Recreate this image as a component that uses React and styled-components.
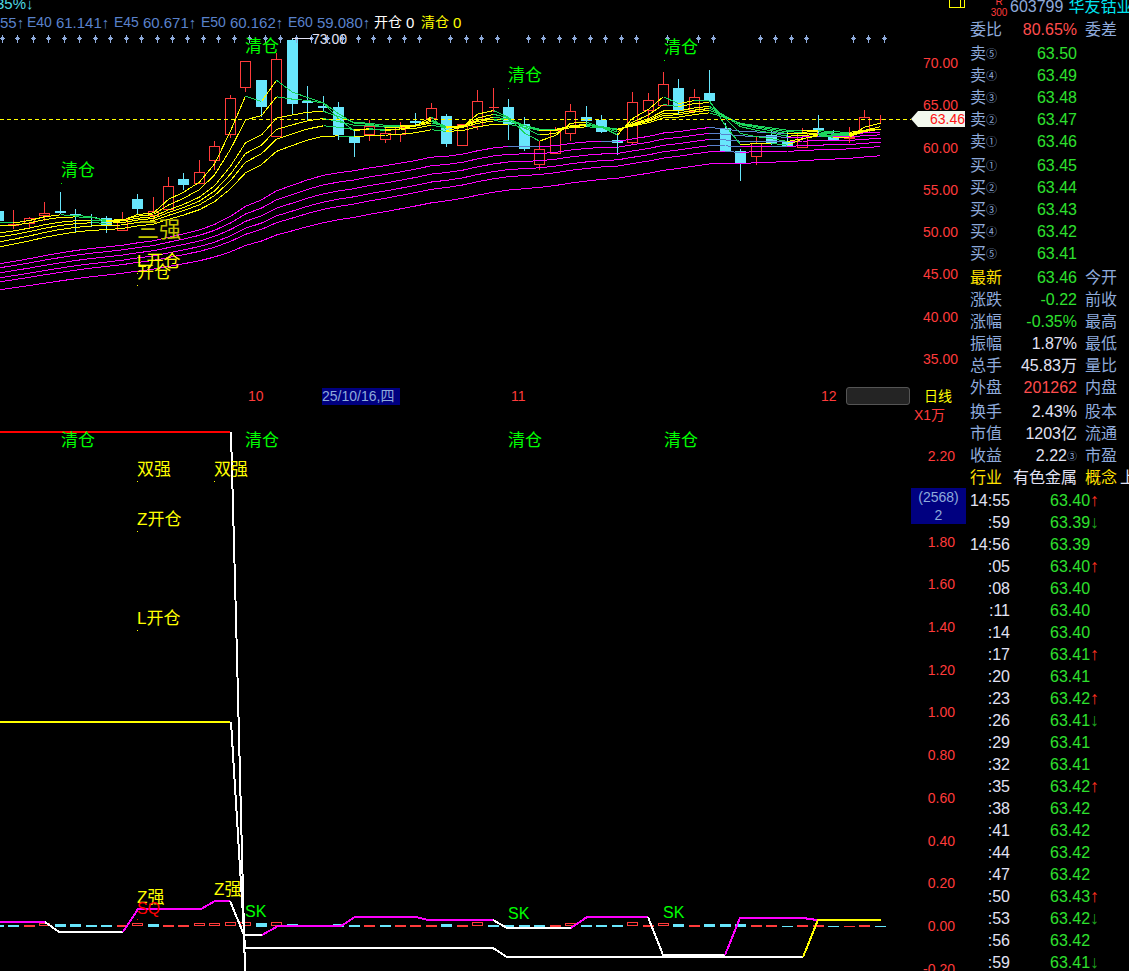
import React from 'react';
import styled, { createGlobalStyle } from 'styled-components';

const color = {
  steel: '#8eaadb',
  blue: '#5a82cc',
  cyan: '#68e6fc',
  red: '#ff3b3b',
  green: '#2ee02e',
  lime: '#00ff00',
  yellow: '#ffff00',
  gold: '#ffe100',
  magenta: '#ff00ff',
  white: '#e2e2f4',
  navy: '#000080',
};

const Global = createGlobalStyle`
  * { box-sizing: border-box; }
  body {
    margin: 0;
    background: #000;
    color: ${color.white};
    font-family: 'Liberation Sans', 'Noto Sans CJK SC', sans-serif;
    font-weight: 400;
  }
`;

const Terminal = styled.div`
  display: flex;
  height: 100vh;
  overflow: hidden;
  background: #000;
`;

const Workspace = styled.main`
  flex: 1;
  min-width: 0;
  display: flex;
  flex-direction: column;
`;

const TopBar = styled.header`
  display: flex;
  justify-content: space-between;
  align-items: flex-end;
  height: 12px;
  overflow: hidden;
`;

const ChangeText = styled.span`
  margin-left: -4px;
  font-size: 15px;
  line-height: 16px;
  color: #4fd8e4;
`;

const LayoutButton = styled.button`
  align-self: flex-start;
  width: 17px;
  height: 9px;
  padding: 0;
  border: 0;
  background: none;
  svg { display: block; }
`;

const IndicatorBar = styled.div`
  display: flex;
  height: 20px;
  line-height: 21px;
  white-space: nowrap;
`;

const Indicator = styled.span`
  flex: 0 0 ${(p) => p.$width};
  display: flex;
  gap: 4px;
  font-size: 14px;
  color: ${(p) => p.$color || color.blue};
  b { font-size: 15px; font-weight: 400; }
`;

const Pane = styled.section`
  display: flex;
  flex: ${(p) => (p.$grow ? '1 0 0' : '0 0 353px')};
  min-height: 0;
  overflow: hidden;
`;

const Plot = styled.svg`
  flex: 1;
  min-width: 0;
  height: ${(p) => p.$height};
  display: block;
`;

const Axis = styled.div`
  position: relative;
  flex: 0 0 55px;
  padding-top: ${(p) => p.$top || '0'};
  font-size: 14px;
  color: ${color.red};
`;

const Scale = styled.ol`
  display: grid;
  grid-auto-rows: 1fr;
  align-items: center;
  height: ${(p) => p.$height};
  margin: 0;
  padding: 0 ${(p) => p.$right} 0 0;
  list-style: none;
  text-align: right;
`;

const Unit = styled.div`
  height: 14px;
  margin-bottom: 14px;
  padding-left: 3px;
  line-height: 16px;
`;

const PriceTag = styled.div`
  position: absolute;
  top: 79px;
  left: 0;
  right: 1px;
  height: 16px;
  line-height: 17px;
  text-align: right;
  color: #ff1414;
  background: #f2f8ee;
  clip-path: polygon(0 50%, 7px 0, 100% 0, 100% 100%, 7px 100%);
`;

const CursorTag = styled.div`
  position: absolute;
  top: 81px;
  left: 0;
  right: 0;
  height: 36px;
  line-height: 18px;
  text-align: center;
  color: ${color.steel};
  background: ${color.navy};
`;

const Timeline = styled.div`
  display: grid;
  grid-template-columns: 248px 74px 189px 310px 25px 64px 14px 1fr;
  align-items: center;
  height: 22px;
  font-size: 14px;
  line-height: 17px;
  color: ${color.red};
`;

const Month = styled.span`
  grid-column: ${(p) => p.$column};
`;

const CursorDate = styled.span`
  grid-column: 3;
  justify-self: start;
  width: 78px;
  height: 17px;
  color: ${color.steel};
  background: ${color.navy};
`;

const ScrollThumb = styled.button`
  grid-column: 6;
  height: 18px;
  padding: 0;
  border: 1px solid #555;
  border-radius: 3px;
  background: #242424;
`;

const Period = styled.span`
  grid-column: 8;
  color: ${color.yellow};
`;

const QuotePanel = styled.aside`
  flex: 0 0 163px;
  overflow: hidden;
  white-space: nowrap;
`;

const Title = styled.h1`
  display: flex;
  gap: 5px;
  height: 19px;
  margin: 0;
  padding-left: 24px;
  overflow: hidden;
  font-size: 16px;
  font-weight: 400;
  line-height: 14px;
  color: ${color.steel};
`;

const Code = styled.span`
  display: flex;
  gap: 2px;
`;

const Margin = styled.small`
  display: flex;
  flex-direction: column;
  align-items: center;
  justify-content: flex-end;
  width: 18px;
  height: 18px;
  font-size: 10px;
  line-height: 11px;
  color: ${color.red};
`;

const StockName = styled.span`
  color: #00e5f0;
`;

const QuoteTable = styled.table`
  width: 180px;
  margin-top: ${(p) => p.$gap || '0'};
  border-collapse: collapse;
  table-layout: fixed;
  font-size: 16px;
  th, td {
    height: 22px;
    padding: 0;
    line-height: 22px;
    font-weight: 400;
  }
  small { line-height: 1; vertical-align: 1px; }
`;

const Label = styled.th`
  width: ${(p) => p.$width || '38px'};
  padding-left: ${(p) => p.$inset || '4px'} !important;
  text-align: left;
  color: ${(p) => p.$color || color.steel};
  small { font-size: 11px; }
  span { margin-left: 3px; color: ${color.white}; }
`;

const Value = styled.td`
  width: 73px;
  text-align: right;
  color: ${(p) => p.$color};
  small { font-size: 10px; color: ${color.steel}; }
`;

const Time = styled.td`
  width: 44px;
  text-align: right;
  color: ${color.white};
`;

const Deal = styled.td`
  padding-left: 40px !important;
  color: ${color.green};
`;

const Arrow = styled.span`
  font-size: 18px;
  line-height: 1;
  color: ${(p) => (p.$up ? '#ff3020' : '#1fa01f')};
`;

/* ---------- chart data ---------- */

// Each bar: [direction, body top, body bottom, high, low]
const bars = [
  ['d', 211, 221, 211, 221], ['u', 224, 225, 210, 229], ['u', 218, 223, 217, 229],
  ['u', 213, 215, 202, 221], ['d', 211, 213, 192, 214], ['d', 214, 216, 209, 232],
  ['d', 217, 218, 214, 227], ['d', 218, 226, 216, 233], ['u', 219, 230, 212, 230],
  ['d', 199, 209, 194, 214], ['u', 211, 215, 197, 222], ['u', 186, 209, 177, 209],
  ['d', 179, 185, 173, 190], ['u', 172, 183, 160, 183], ['u', 146, 160, 141, 170],
  ['u', 98, 134, 95, 138], ['u', 61, 87, 61, 92], ['d', 80, 107, 80, 117],
  ['u', 59, 136, 53, 136], ['d', 40, 104, 38, 114], ['d', 101, 103, 86, 120],
  ['d', 106, 108, 96, 111], ['d', 107, 135, 102, 140], ['d', 137, 143, 130, 157],
  ['u', 126, 134, 120, 141], ['u', 133, 139, 127, 143], ['u', 127, 134, 122, 142],
  ['d', 121, 123, 113, 127], ['u', 108, 118, 103, 118], ['d', 116, 144, 114, 147],
  ['u', 124, 145, 124, 145], ['u', 101, 126, 90, 130], ['u', 107, 107, 88, 112],
  ['d', 107, 124, 99, 140], ['d', 124, 149, 117, 151], ['u', 149, 164, 141, 170],
  ['u', 130, 153, 127, 153], ['u', 111, 133, 104, 141], ['d', 117, 121, 106, 127],
  ['d', 120, 132, 115, 133], ['d', 140, 143, 133, 155], ['u', 102, 142, 92, 145],
  ['u', 100, 110, 93, 118], ['u', 84, 105, 72, 105], ['d', 88, 111, 79, 115],
  ['u', 97, 111, 89, 111], ['d', 93, 101, 70, 101], ['d', 128, 151, 123, 152],
  ['d', 151, 163, 149, 181], ['u', 143, 156, 137, 165], ['d', 135, 143, 129, 145],
  ['d', 141, 147, 131, 147], ['u', 133, 147, 128, 147], ['d', 128, 130, 115, 134],
  ['d', 136, 140, 130, 141], ['u', 137, 138, 127, 143], ['u', 117, 132, 110, 132],
  ['u', 119, 119, 115, 124],
];

const barX = (i) => Math.floor(-1.7 + 15.47 * i) + 0.5;

// Moving averages: [period, starting level]
const fastLines = [[3, 222], [5, 226], [8, 233], [10, 237], [12, 242], [15, 247]];
const slowLines = [[30, 264], [35, 268], [40, 273], [45, 278], [50, 282], [60, 290]];

const average = ([period, start]) => {
  const points = [start];
  for (let i = 1; i < bars.length; i += 1) {
    const [dir, top, bottom] = bars[i];
    const close = dir === 'u' ? top : bottom;
    const k = 2 / (period + 1);
    points.push(points[i - 1] + k * (close - points[i - 1]));
  }
  return points;
};

const dotGaps = [28, 33, 42, 44, 47, 48, 53, 54];

// Lower-pane volume ticks, one code per bar: c / r filled, h hollow; the digit is the height
const ticks = (
  'c2 c2 r2 h3 c3 c3 c2 c2 r2 h3 c3 r2 r2 h3 h3 h4 h4 c4 h4 c3 r2 r1 c3 c2 r2 c2 r2 r2 r2 c3 '
  + 'r2 h4 c2 c2 c2 c2 r2 h3 c2 c2 c2 h4 r2 h3 c3 r2 c3 c3 c3 r2 r2 c1 r2 r2 c1 r1 r2 c1'
).split(' ');

const strokes = [
  ['#ff0000', '0,432 230,432'],
  ['#ffff00', '0,722 230,722'],
  ['#ffffff', '231,432 232,470 234,544 236,618 245,971 245,985'],
  ['#ffffff', '231,722 245,948 493,948 507,957 803,957'],
  ['#ff00ff', '0,922 45,922'],
  ['#ffffff', '45,922 59,932 123,932'],
  ['#ff00ff', '123,932 138,909 201,909 215,901 230,901'],
  ['#ffffff', '230,901 244,935 262,935'],
  ['#ff00ff', '262,935 278,926 341,926 355,917 416,917 428,920 493,920'],
  ['#ffffff', '493,920 507,928 571,928'],
  ['#ff00ff', '571,928 587,917 648,917'],
  ['#ffffff', '648,917 663,955 725,955'],
  ['#ff00ff', '725,955 740,918 803,918 817,920'],
  ['#ffff00', '803,957 818,920 881,920'],
];

const ChartText = styled.text`
  font-size: ${(p) => p.$size || '17px'};
  fill: ${(p) => p.$color || color.yellow};
`;

// Signal: text, x, baseline, colour, anchor-dot y
const upperSignals = [
  ['清仓', 61, 176, color.lime, 183],
  ['清仓', 245, 52, color.lime],
  ['清仓', 508, 81, color.lime, 88],
  ['清仓', 664, 53, color.lime, 60],
  ['L开仓', 137, 267, color.yellow, 273],
  ['开仓', 137, 278, color.yellow, 285],
];

const lowerSignals = [
  ['清仓', 61, 446, color.lime],
  ['清仓', 245, 446, color.lime],
  ['清仓', 508, 446, color.lime],
  ['清仓', 664, 446, color.lime],
  ['双强', 137, 475, color.yellow, 481],
  ['双强', 214, 475, color.yellow, 481],
  ['Z开仓', 137, 525, color.yellow, 531],
  ['L开仓', 137, 624, color.yellow, 630],
  ['Z强', 137, 903, color.yellow],
  ['Z强', 214, 895, color.yellow],
  ['SQ', 137, 914, '#ff0000', 919],
  ['SK', 245, 917, color.lime],
  ['SK', 508, 919, color.lime],
  ['SK', 663, 918, color.lime],
];

function Signals({ items }) {
  return items.map(([text, x, y, fill, dot]) => (
    <g key={`${text}${x}${y}`}>
      <ChartText x={x} y={y} $color={fill} $size={text[0] === 'S' ? '16px' : '17px'}>{text}</ChartText>
      {dot && <rect x={x} y={dot} width="1" height="1" fill={fill} />}
    </g>
  ));
}

function Candle({ bar, x }) {
  const [dir, top, bottom, high, low] = bar;
  const up = dir === 'u';
  const tint = up ? color.red : color.cyan;
  return (
    <g stroke={tint} fill="none" shapeRendering="crispEdges">
      {high < top && <line x1={x} x2={x} y1={high} y2={top} />}
      {low > bottom && <line x1={x} x2={x} y1={bottom} y2={low} />}
      {up ? (
        <path d={`M${x - 5} ${top + 0.5}h10v${bottom - top}h-10z`} />
      ) : (
        <rect x={x - 5.5} y={top} width="11" height={bottom - top} fill={tint} stroke="none" />
      )}
    </g>
  );
}

function AverageLine({ line, rise, fall }) {
  const points = average(line);
  return points.slice(1).map((y, i) => (
    <line
      key={i}
      x1={barX(i)}
      x2={barX(i + 1)}
      y1={points[i]}
      y2={y}
      stroke={y <= points[i] + 0.02 ? rise : fall}
      shapeRendering="crispEdges"
    />
  ));
}

function PricePlot() {
  return (
    <Plot $height="353px" role="img" aria-label="K线图">
      <g transform="translate(0 -32)">
        {bars.map((bar, i) => <Candle key={i} bar={bar} x={barX(i)} />)}
        {slowLines.map((l) => <AverageLine key={l[0]} line={l} rise={color.magenta} fall={color.blue} />)}
        {fastLines.map((l) => <AverageLine key={l[0]} line={l} rise={color.yellow} fall="#1cd65c" />)}
        <line x1="0" x2="100%" y1="119.5" y2="119.5" stroke={color.yellow} strokeDasharray="4 3" shapeRendering="crispEdges" />
        <g stroke={color.steel} fill={color.steel}>
          {bars.map((_, i) => dotGaps.includes(i) ? null : (
            <path
              key={i}
              shapeRendering="crispEdges"
              d={`M${barX(i) + 4} 35v8M${barX(i) + 1.5} 38.5h5M${barX(i) + 2.5} 37.5h3M${barX(i) + 2.5} 39.5h3`}
            />
          ))}
        </g>
        <line x1="292" x2="312" y1="38.5" y2="38.5" stroke={color.white} />
        <ChartText x="312" y="44" $size="14px" $color={color.white}>73.00</ChartText>
        <Signals items={upperSignals} />
        <ChartText x="137" y="237" $size="22px" $color="#c4c400">三强</ChartText>
      </g>
    </Plot>
  );
}

function SignalPlot() {
  return (
    <Plot $height="100%" role="img" aria-label="信号副图">
      <g transform="translate(0 -407)">
        <g shapeRendering="crispEdges">
          {ticks.map((code, i) => {
            const h = Number(code[1]);
            const tint = code[0] === 'c' ? color.cyan : color.red;
            return code[0] === 'h'
              ? <rect key={i} x={barX(i) - 5} y={926.5 - h} width="10" height={h - 1} fill="none" stroke={tint} />
              : <rect key={i} x={barX(i) - 5.5} y={927 - h} width="11" height={h} fill={tint} />;
          })}
          {strokes.map(([stroke, points]) => (
            <polyline key={points} points={points} stroke={stroke} strokeWidth="2" fill="none" />
          ))}
        </g>
        <Signals items={lowerSignals} />
      </g>
    </Plot>
  );
}

/* ---------- quote data ---------- */

const asks = [['卖', '⑤', '63.50'], ['卖', '④', '63.49'], ['卖', '③', '63.48'], ['卖', '②', '63.47'], ['卖', '①', '63.46']];
const bids = [['买', '①', '63.45'], ['买', '②', '63.44'], ['买', '③', '63.43'], ['买', '④', '63.42'], ['买', '⑤', '63.41']];

const summary = [
  ['最新', '63.46', '今开', color.green, color.gold],
  ['涨跌', '-0.22', '前收', color.green],
  ['涨幅', '-0.35%', '最高', color.green],
  ['振幅', '1.87%', '最低', color.white],
  ['总手', '45.83万', '量比', color.white],
  ['外盘', '201262', '内盘', '#ff4d4d'],
];

const deals = [
  ['14:55', '63.40', '↑'], [':59', '63.39', '↓'], ['14:56', '63.39'], [':05', '63.40', '↑'],
  [':08', '63.40'], [':11', '63.40'], [':14', '63.40'], [':17', '63.41', '↑'], [':20', '63.41'],
  [':23', '63.42', '↑'], [':26', '63.41', '↓'], [':29', '63.41'], [':32', '63.41'],
  [':35', '63.42', '↑'], [':38', '63.42'], [':41', '63.42'], [':44', '63.42'], [':47', '63.42'],
  [':50', '63.43', '↑'], [':53', '63.42', '↓'], [':56', '63.42'], [':59', '63.41', '↓'],
];

function QuoteRow({ label, value, other, tint, labelTint }) {
  return (
    <tr>
      <Label scope="row" $color={labelTint}>{label}</Label>
      <Value $color={tint}>{value}</Value>
      <Label as="td" $width="69px" $inset="8px">{other}</Label>
    </tr>
  );
}

function DepthTable({ rows }) {
  return (
    <QuoteTable $gap="2px">
      <tbody>
        {rows.map(([side, level, price]) => (
          <QuoteRow key={level} label={<>{side}<small>{level}</small></>} value={price} tint={color.green} />
        ))}
      </tbody>
    </QuoteTable>
  );
}

export default function App() {
  return (
    <Terminal>
      <Global />
      <Workspace>
        <TopBar>
          <ChangeText>35%↓</ChangeText>
          <LayoutButton aria-label="布局">
            <svg width="17" height="9" fill="none" stroke={color.yellow} shapeRendering="crispEdges">
              <path d="M.5 0v7.5h15V0M11.5 0v7.5" />
            </svg>
          </LayoutButton>
        </TopBar>
        <IndicatorBar>
          <Indicator $width="27px"><b>55↑</b></Indicator>
          <Indicator $width="87px">E40 <b>61.141↑</b></Indicator>
          <Indicator $width="87px">E45 <b>60.671↑</b></Indicator>
          <Indicator $width="87px">E50 <b>60.162↑</b></Indicator>
          <Indicator $width="86px">E60 <b>59.080↑</b></Indicator>
          <Indicator $width="47px" $color="#ffffff">开仓 <b>0</b></Indicator>
          <Indicator $width="47px" $color={color.yellow}>清仓 <b>0</b></Indicator>
        </IndicatorBar>

        <Pane>
          <PricePlot />
          <Axis $top="10px">
            <Scale $height="338px" $right="8px">
              {['70.00', '65.00', '60.00', '55.00', '50.00', '45.00', '40.00', '35.00'].map((t) => <li key={t}>{t}</li>)}
            </Scale>
            <PriceTag>63.46</PriceTag>
          </Axis>
        </Pane>

        <Timeline>
          <Month $column="2">10</Month>
          <CursorDate>25/10/16,四</CursorDate>
          <Month $column="4">11</Month>
          <Month $column="5">12</Month>
          <ScrollThumb aria-label="滚动" />
          <Period>日线</Period>
        </Timeline>

        <Pane $grow>
          <SignalPlot />
          <Axis>
            <Unit>X1万</Unit>
            <Scale $height="555px" $right="11px">
              {['2.20', '', '1.80', '1.60', '1.40', '1.20', '1.00', '0.80', '0.60', '0.40', '0.20', '0.00', '-0.20'].map((t) => (
                <li key={t}>{t}</li>
              ))}
            </Scale>
            <CursorTag>(2568)<br />2</CursorTag>
          </Axis>
        </Pane>
      </Workspace>

      <QuotePanel>
        <Title>
          <Code>
            <Margin><span>R</span><span>300</span></Margin>
            603799
          </Code>
          <StockName>华友钴业</StockName>
        </Title>
        <QuoteTable>
          <tbody>
            <QuoteRow label="委比" value="80.65%" other="委差" tint="#ff4d4d" />
          </tbody>
        </QuoteTable>
        <DepthTable rows={asks} />
        <DepthTable rows={bids} />
        <QuoteTable $gap="2px">
          <tbody>
            {summary.map(([label, value, other, tint, labelTint]) => (
              <QuoteRow key={label} label={label} value={value} other={other} tint={tint} labelTint={labelTint} />
            ))}
          </tbody>
        </QuoteTable>
        <QuoteTable $gap="2px">
          <tbody>
            <QuoteRow label="换手" value="2.43%" other="股本" tint={color.white} />
            <QuoteRow label="市值" value="1203亿" other="流通" tint={color.white} />
            <QuoteRow label="收益" value={<>2.22<small>③</small></>} other="市盈" tint={color.white} />
            <tr>
              <Label scope="row" $color={color.gold}>行业</Label>
              <Value $color={color.white}>有色金属</Value>
              <Label as="td" $width="69px" $inset="8px" $color={color.gold}>概念<span>上</span></Label>
            </tr>
          </tbody>
        </QuoteTable>
        <QuoteTable $gap="1px">
          <tbody>
            {deals.map(([time, price, move], i) => (
              <tr key={i}>
                <Time>{time}</Time>
                <Deal>{price}{move && <Arrow $up={move === '↑'}>{move}</Arrow>}</Deal>
              </tr>
            ))}
          </tbody>
        </QuoteTable>
      </QuotePanel>
    </Terminal>
  );
}
